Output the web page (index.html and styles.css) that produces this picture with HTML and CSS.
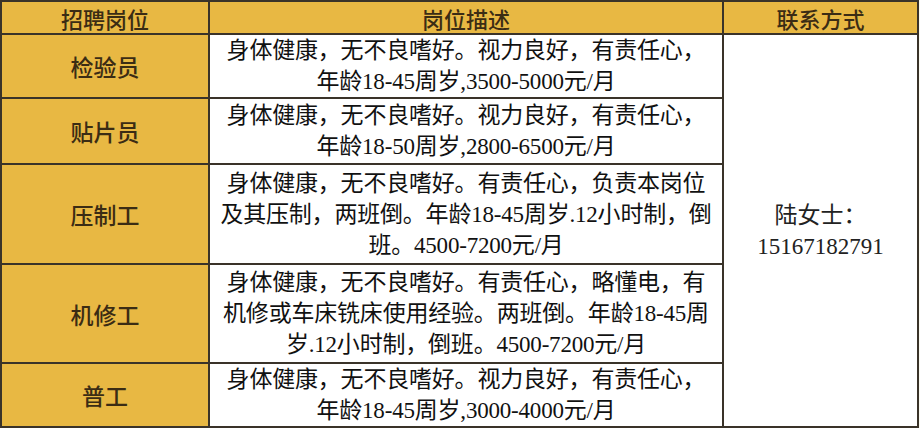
FILE: index.html
```html
<!DOCTYPE html>
<html lang="zh">
<head>
<meta charset="utf-8">
<link rel="stylesheet" href="styles.css">
</head>
<body>
<table class="jobs">
  <colgroup>
    <col class="c1"><col class="c2"><col class="c3">
  </colgroup>
  <tr class="head">
    <th>招聘岗位</th>
    <th>岗位描述</th>
    <th>联系方式</th>
  </tr>
  <tr class="r1">
    <td class="name">检验员</td>
    <td class="desc">身体健康，无不良嗜好。视力良好，有责任心，<br>年龄18-45周岁,3500-5000元/月</td>
    <td class="contact" rowspan="5">陆女士：<br>15167182791</td>
  </tr>
  <tr class="r2">
    <td class="name">贴片员</td>
    <td class="desc">身体健康，无不良嗜好。视力良好，有责任心，<br>年龄18-50周岁,2800-6500元/月</td>
  </tr>
  <tr class="r3">
    <td class="name">压制工</td>
    <td class="desc">身体健康，无不良嗜好。有责任心，负责本岗位<br>及其压制，两班倒。年龄18-45周岁.12小时制，倒<br>班。4500-7200元/月</td>
  </tr>
  <tr class="r4">
    <td class="name">机修工</td>
    <td class="desc">身体健康，无不良嗜好。有责任心，略懂电，有<br>机修或车床铣床使用经验。两班倒。年龄18-45周<br>岁.12小时制，倒班。4500-7200元/月</td>
  </tr>
  <tr class="r5">
    <td class="name">普工</td>
    <td class="desc">身体健康，无不良嗜好。视力良好，有责任心，<br>年龄18-45周岁,3000-4000元/月</td>
  </tr>
</table>
</body>
</html>
```
FILE: styles.css
```css
html, body {
  margin: 0;
  padding: 0;
  background: #fbfaf0;
}
body {
  width: 920px;
  height: 428px;
  overflow: hidden;
}
.jobs {
  border-collapse: collapse;
  table-layout: fixed;
  width: 917px;
  font-family: "Liberation Serif", "Noto Sans CJK SC", serif;
  background: #ffffff;
  border: 2px solid #2e2a22;
}
.c1 { width: 208px; }
.c2 { width: 514px; }
.c3 { width: 195px; }
.jobs th, .jobs td {
  border: 2px solid #3a3329;
  padding: 0;
  text-align: center;
  vertical-align: middle;
}
.head th {
  background: #e8b843;
  color: #3b2c14;
  font-family: "Noto Sans CJK SC", sans-serif;
  font-weight: 500;
  font-size: 22px;
  height: 31px;
  line-height: 28px;
}
.name {
  background: #e8b843;
  color: #3b2c14;
  font-family: "Noto Sans CJK SC", sans-serif;
  font-size: 23px;
  font-weight: 500;
}
.desc {
  color: #111;
  font-size: 23px;
  line-height: 31px;
  letter-spacing: -0.2px;
}
.contact {
  color: #222;
  font-size: 23px;
  line-height: 31px;
  padding-top: 8px;
}
.r1 td { height: 62px; }
.r2 td { height: 64px; }
.r3 td { height: 98px; }
.r4 td { height: 97px; }
.r5 td { height: 61px; }
```
